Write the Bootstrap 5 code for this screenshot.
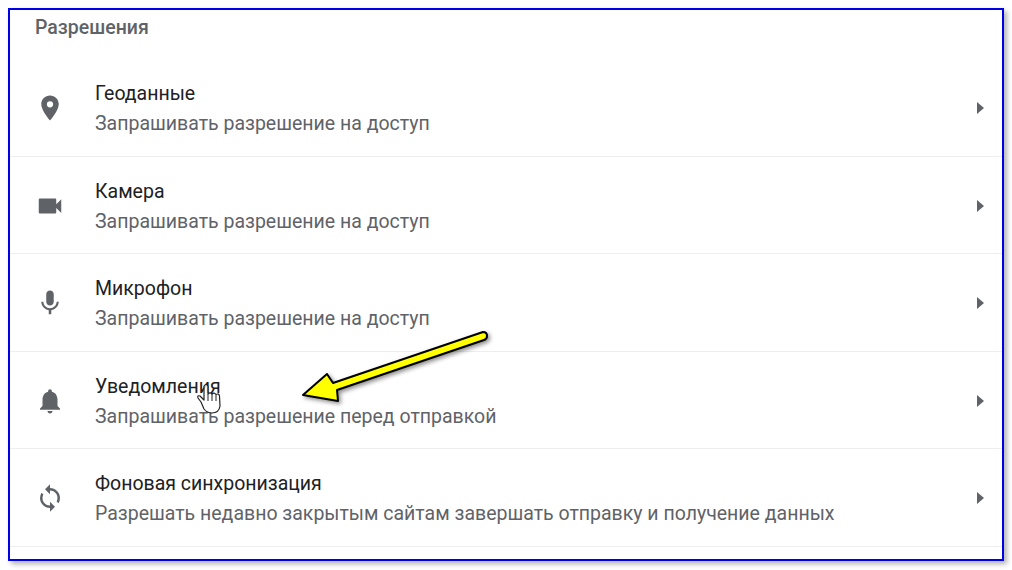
<!DOCTYPE html>
<html lang="ru">
<head>
  <meta charset="UTF-8" />
  <title>Разрешения</title>
  <link href="https://cdn.jsdelivr.net/npm/bootstrap@5.3.0/dist/css/bootstrap.min.css" rel="stylesheet" />
  <style>
    html, body { height: 570px; overflow: hidden; background: #fff; }
    body { font-family: Roboto, "Liberation Sans", sans-serif; padding: 8px 8px 0; }
    .shot-frame { position: relative; width: 996px; height: 553px; border: 2px solid #0000e6; box-shadow: 3px 3px 5px rgba(0,0,0,.3); overflow: hidden; background: #fff; }
    .perm-head { height: 49px; padding: 6px 0 0 25px; font-size: 19.5px; line-height: 24px; font-weight: 500; color: #5f6368; }
    .perm-row { height: 97.5px; border-bottom: 1px solid #eeeeee; padding: 2px 18px 0 0; }
    .perm-icon { width: 30px; height: 30px; margin-left: 25px; margin-right: 30px; fill: #5f6368; flex: none; }
    .perm-text { padding-top: 2px; }
    .perm-title { font-size: 19.5px; line-height: 24px; color: #202124; margin-bottom: 6px; }
    .perm-sub { font-size: 19.5px; line-height: 24px; color: #5f6368; }
    .perm-arrow { width: 0; height: 0; border-left: 7px solid #5f6368; border-top: 6px solid transparent; border-bottom: 6px solid transparent; }
    .pointer-arrow { position: absolute; left: 280px; top: 310px; overflow: visible; }
    .pointer-hand { position: absolute; left: 185px; top: 370px; }
  </style>
</head>
<body>
  <div class="shot-frame">
    <div class="perm-head">Разрешения</div>

    <div class="perm-row d-flex align-items-center">
      <svg class="perm-icon" viewBox="0 0 24 24"><path d="M12 2C8.13 2 5 5.13 5 9c0 5.25 7 13 7 13s7-7.75 7-13c0-3.87-3.13-7-7-7zm0 9.5a2.5 2.5 0 0 1 0-5 2.5 2.5 0 0 1 0 5z"/></svg>
      <div class="perm-text flex-grow-1">
        <div class="perm-title">Геоданные</div>
        <div class="perm-sub">Запрашивать разрешение на доступ</div>
      </div>
      <div class="perm-arrow"></div>
    </div>

    <div class="perm-row d-flex align-items-center">
      <svg class="perm-icon" viewBox="0 0 24 24"><path d="M17 10.5V7c0-.55-.45-1-1-1H4c-.55 0-1 .45-1 1v10c0 .55.45 1 1 1h12c.55 0 1-.45 1-1v-3.500l4 4v-11l-4 4z"/></svg>
      <div class="perm-text flex-grow-1">
        <div class="perm-title">Камера</div>
        <div class="perm-sub">Запрашивать разрешение на доступ</div>
      </div>
      <div class="perm-arrow"></div>
    </div>

    <div class="perm-row d-flex align-items-center">
      <svg class="perm-icon" viewBox="0 0 24 24"><path d="M12 14c1.66 0 2.99-1.34 2.99-3L15 5c0-1.66-1.34-3-3-3S9 3.34 9 5v6c0 1.66 1.34 3 3 3zm5.3-3c0 3-2.54 5.100-5.300 5.100S6.700 14 6.700 11H5c0 3.410 2.720 6.230 6 6.720V21h2v-3.280c3.280-.48 6-3.300 6-6.720h-1.700z"/></svg>
      <div class="perm-text flex-grow-1">
        <div class="perm-title">Микрофон</div>
        <div class="perm-sub">Запрашивать разрешение на доступ</div>
      </div>
      <div class="perm-arrow"></div>
    </div>

    <div class="perm-row d-flex align-items-center">
      <svg class="perm-icon" viewBox="0 0 24 24"><path d="M12 22c1.100 0 2-.9 2-2h-4c0 1.100.9 2 2 2zm6-6v-5c0-3.070-1.630-5.640-4.500-6.320V4c0-.83-.67-1.500-1.500-1.500s-1.500.67-1.500 1.500v.68C7.640 5.360 6 7.920 6 11v5l-2 2v1h16v-1l-2-2z"/></svg>
      <div class="perm-text flex-grow-1">
        <div class="perm-title">Уведомления</div>
        <div class="perm-sub">Запрашивать разрешение перед отправкой</div>
      </div>
      <div class="perm-arrow"></div>
    </div>

    <div class="perm-row d-flex align-items-center">
      <svg class="perm-icon" viewBox="0 0 24 24"><path d="M12 4V1L8 5l4 4V6c3.310 0 6 2.690 6 6 0 1.010-.25 1.970-.7 2.800l1.460 1.460A7.930 7.930 0 0 0 20 12c0-4.420-3.580-8-8-8zm0 14c-3.310 0-6-2.690-6-6 0-1.010.25-1.970.7-2.800L5.240 7.740A7.930 7.930 0 0 0 4 12c0 4.420 3.580 8 8 8v3l4-4-4-4v3z"/></svg>
      <div class="perm-text flex-grow-1">
        <div class="perm-title">Фоновая синхронизация</div>
        <div class="perm-sub">Разрешать недавно закрытым сайтам завершать отправку и получение данных</div>
      </div>
      <div class="perm-arrow"></div>
    </div>

    <svg class="pointer-arrow" width="220" height="90" viewBox="0 0 220 90">
      <defs><filter id="arrowShadow" x="-10%" y="-20%" width="120%" height="150%"><feDropShadow dx="2" dy="2" stdDeviation="2" flood-color="#000" flood-opacity=".45"/></filter></defs>
      <path filter="url(#arrowShadow)" d="M13 75 L37 54 L43 63 L193 12 Q197 12 197 16 Q197 19 194 20 L47 70 L48 81 Z" fill="#ffff00" stroke="#000" stroke-width="2" stroke-linejoin="round"/>
    </svg>
    <svg class="pointer-hand" width="30" height="36" viewBox="0 0 30 36">
      <path d="M6 22 L3 18 Q2 15 5 16 L9 20 L9 6 Q11 3 13 6 L13 14 Q15 12 17 14 Q19 12 21 14.500 Q24 13 24.500 16 L25 26 Q24 33 17 33 Q12 33 9 29 Z" fill="#fff" fill-opacity=".7" stroke="#222" stroke-width="1.200" stroke-linejoin="round"/>
      <path d="M13 14 V21 M17 14 V21 M21 15 V21" stroke="#222" stroke-width="1" fill="none"/>
    </svg>
  </div>
  <script src="https://cdn.jsdelivr.net/npm/bootstrap@5.3.0/dist/js/bootstrap.bundle.min.js"></script>
</body>
</html>
